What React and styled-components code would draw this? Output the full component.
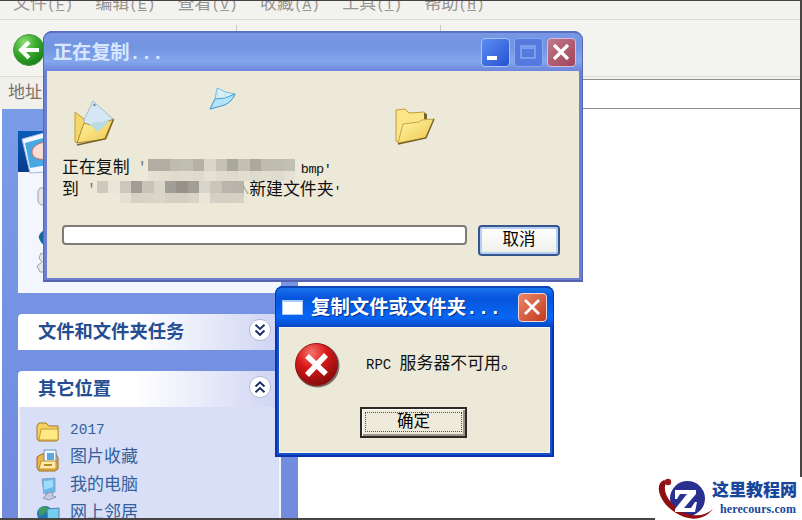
import React from 'react'
import styled, { createGlobalStyle } from 'styled-components'

const GlobalStyle = createGlobalStyle`
    * {
        box-sizing: border-box;
    }
    body {
        margin: 0;
        overflow: hidden;
        font-family: "Liberation Mono", "Noto Sans CJK SC", monospace;
    }
`;

const menus = [['文件', 'F'], ['编辑', 'E'], ['查看', 'V'], ['收藏', 'A'], ['工具', 'T'], ['帮助', 'H']]

// shades of the censored file name and path, one per block
const nameTop = ['#b1ada2', '#b1ada2', '#bebbaf', '#c0bdb1', '#b5b1a7', '#d9d5c7', '#c5c1b5', '#aaa79c', '#c3bfb3', '#aaa79d', '#bfbcaf', '#bfbcb0', '#c2bfb3']
const nameLow = ['#e4e0d2', '#e1ddcf', '#dedace', '#e0dccf', '#dedace', '#e5e1d3', '#e0dccf', '#dedace', '#e1ddcf', '#dedace', '#e1ddcf', '#dfdbcf', '#e4e0d3']
const pathTop = ['#cdc9bd', '#e8e4d8', '#cbc7bc', '#a19d94', '#c6c2b7', '#d9d5c8', '#a19e97', '#969289', '#a19e96', '#d8d4c8', '#c9c5ba', '#b9b5ab', '#b7b3a8']
const pathLow = ['#ece9d8', '#ece9d8', '#e3dfd3', '#d5d1c5', '#d7d3c7', '#d9d5c9', '#d4d0c4', '#d3cfc3', '#d7d3c7', '#e9e5d7', '#d4d0c5', '#d4d0c4', '#d5d1c5']

function Mosaic({ top, low }) {
    return (
        <Blocks>
            {top.concat(low).map((shade, i) => <Block key={i} $shade={shade} />)}
        </Blocks>
    )
}

function BackIcon() {
    return (
        <svg width="34" height="34" viewBox="0 0 34 34">
            <defs>
                <radialGradient id="back" cx="35%" cy="25%" r="80%">
                    <stop offset="0" stopColor="#8bdd72" />
                    <stop offset=".5" stopColor="#38ab2c" />
                    <stop offset="1" stopColor="#167d18" />
                </radialGradient>
            </defs>
            <circle cx="17" cy="17" r="15.5" fill="url(#back)" stroke="#4c9744" />
            <path d="M17 9l-8 8 8 8M10 17h17" fill="none" stroke="#fff" strokeWidth="4" />
        </svg>
    )
}

function FolderOpen({ paper }) {
    return (
        <svg width="44" height="48" viewBox="0 0 44 48">
            <defs>
                <linearGradient id="fold" x1="0" y1="0" x2="1" y2="1">
                    <stop offset="0" stopColor="#fff6a6" />
                    <stop offset="1" stopColor="#efc64e" />
                </linearGradient>
            </defs>
            {paper
                ? <path d="M3 14l9 7 2 12-8 12-3-1z" fill="#f5d968" stroke="#c49c3c" />
                : <path d="M3 13l9-1 4 4 15-1 2 2v17L6 46l-3-2z" fill="#fae588" stroke="#c49c3c" />}
            {paper && <path d="M12 22L21 3l20 18-9 14-16 4z" fill="#d5e6f5" stroke="#a7bdce" />}
            {paper && <circle cx="22.500" cy="7" r="1.300" fill="#7890ad" />}
            {paper
                ? <path d="M5 45l7-20 10 3 20-7-8 20z" fill="url(#fold)" stroke="#ad892e" />
                : <path d="M5 46l5-19 16-2 3-2 12-1-9 19z" fill="url(#fold)" stroke="#c6a344" />}
            {paper && <path d="M17 27c9-6 12-1 20-5-4 8-9 9-13 12-1-4-3-5-7-7z" fill="#b9dce2" />}
            <path d="M5 47l28-6 8-19" fill="none" stroke="#756126" strokeWidth="1.300" />
            {!paper && <path d="M31 16l3 1v5h-3z" fill="#746431" />}
        </svg>
    )
}

function FlyingPage() {
    return (
        <svg width="30" height="26" viewBox="0 0 30 26">
            <path d="M9 1q8 5 18 6-4 10-14 12l-11 3 5-10z" fill="#d9f1fb" stroke="#7ebbdc" />
            <path d="M7 12l10-1 10-4q-4 10-14 12L2 22z" fill="#b5e4f8" stroke="#459dcc" />
            <path d="M9 2l1 9M17 6v5" stroke="#b6ddea" />
        </svg>
    )
}

function PhotoIcon() {
    return (
        <svg width="30" height="44" viewBox="0 0 30 44">
            <path d="M2 8L27 1v40l-17 1z" fill="#f3f7ff" stroke="#9db8df" />
            <path d="M5 12l22-6v28l-17 3z" fill="#48a8e2" />
            <path d="M27 11c-8 0-16 5-15 11s9 7 15 6z" fill="#f7ddd4" stroke="#c56d68" />
        </svg>
    )
}

function Chevrons({ up }) {
    return (
        <svg width="24" height="24" viewBox="0 0 24 24">
            <circle cx="12" cy="12" r="10.6" fill="#fff" stroke="#b2b9d2" />
            <path
                d={up ? 'M7.5 11.5L12 7.3l4.5 4.2M7.5 17.3l4.5-4.2 4.5 4.2' : 'M7.5 6.8L12 11l4.5-4.2M7.5 12.6l4.5 4.2 4.5-4.2'}
                fill="none" stroke="#1d2f68" strokeWidth="2" />
        </svg>
    )
}

function PlaceIcon({ kind }) {
    return (
        <svg width="24" height="24" viewBox="0 0 24 24">
            {kind === 'folder' && <>
                <path d="M1 5l2-3h7l3 3h9v14l-2 1H3l-2-2z" fill="#f4d164" stroke="#a3781f" />
                <path d="M5 8h17v11H3z" fill="#fee983" stroke="#c49a31" />
            </>}
            {kind === 'photos' && <>
                <path d="M1 8l5-3h14l2 4v11l-3 2H3l-2-3z" fill="#edb54b" stroke="#9a6d22" />
                <path d="M8 1h12v13H8z" fill="#f3faff" stroke="#5c92bd" />
                <path d="M11 4h7v7h-7z" fill="#5da8d8" />
                <path d="M5 12h15v8H3z" fill="#ffeaa6" stroke="#bd8d2d" />
                <path d="M8 16h8" stroke="#b58a35" strokeWidth="2" />
            </>}
            {kind === 'computer' && <>
                <path d="M6 2l13-1v14l-11 2z" fill="#65b9ec" stroke="#8aa4c5" />
                <path d="M8 4l9-1v7l-9 3z" fill="#9bdcfb" />
                <path d="M12 16l4-1 1 4 3 1-7 3-6-2z" fill="#c5c8df" stroke="#9094b4" />
            </>}
            {kind === 'network' && <>
                <circle cx="9" cy="9" r="8" fill="#2179b4" />
                <path d="M3 4q6-5 9 0l-4 5-5 2z" fill="#3e9d5a" />
                <path d="M11 4l12-1v13l-11 2z" fill="#74cdee" stroke="#517fae" />
            </>}
        </svg>
    )
}

function ErrorIcon() {
    return (
        <svg width="48" height="48" viewBox="0 0 48 48">
            <defs>
                <radialGradient id="err" cx="38%" cy="22%" r="80%">
                    <stop offset="0" stopColor="#f5746b" />
                    <stop offset=".45" stopColor="#d8191a" />
                    <stop offset="1" stopColor="#840c0c" />
                </radialGradient>
            </defs>
            <circle cx="22.500" cy="22.500" r="22" fill="#77736b" />
            <circle cx="21.500" cy="21.500" r="21" fill="url(#err)" stroke="#9a1717" />
            <path d="M12 13l19 18M31 12L12 32" stroke="#fff" strokeWidth="5.500" />
        </svg>
    )
}

function LogoMark() {
    return (
        <svg width="60" height="43" viewBox="0 0 60 43">
            <circle cx="32.500" cy="21.500" r="17.500" fill="#29308f" />
            <path d="M9 3C-1 7 4 24 18 34s30 11 40-2c-10 9-25 8-36-1S7 11 12 5z" fill="#8f1013" />
            <circle cx="13" cy="5" r="3.200" fill="#98191b" />
            <path d="M20 13h21v4L29 31h7l4-6h2l-2 10H20v-3l12-15h-7l-3 5h-2z" fill="#fff" />
        </svg>
    )
}

function App() {
    return (
        <Screen>
            <GlobalStyle />
            <MenuBar>
                {menus.map(([label, key]) => <MenuItem key={key}>{label}<span>(<u>{key}</u>)</span></MenuItem>)}
            </MenuBar>
            <ToolBar>
                <BackIcon />
                <Separator $gap={190} />
                <Separator $gap={203} />
            </ToolBar>
            <AddressBar>
                <AddressLabel>地址</AddressLabel>
                <AddressField />
            </AddressBar>
            <Main>
                <SideBar>
                    <PictureTasks>
                        <PictureHead><PhotoIcon /></PictureHead>
                        <PictureBody>
                            <svg width="10" height="94" viewBox="0 0 10 94">
                                <path d="M9 5H4L2 8v11l3 3h4M9 72L5 70l-2 5 3 4-5 4 3 6h5" fill="#e6e6e9" stroke="#9da0aa" />
                                <path d="M10 46q-8 4-7 9t7 8z" fill="#176a9f" />
                            </svg>
                        </PictureBody>
                    </PictureTasks>
                    <PanelHead>文件和文件夹任务<Chevrons /></PanelHead>
                    <Panel>
                        <PanelHead>其它位置<Chevrons up /></PanelHead>
                        <Places>
                            <Place><PlaceIcon kind="folder" /><span>2017</span></Place>
                            <Place><PlaceIcon kind="photos" /><span>图片收藏</span></Place>
                            <Place><PlaceIcon kind="computer" /><span>我的电脑</span></Place>
                            <Place><PlaceIcon kind="network" /><span>网上邻居</span></Place>
                        </Places>
                    </Panel>
                </SideBar>
            </Main>
            <TopEdge />
            <BottomEdge />
            <RightEdge />

            <CopyWindow>
                <CopyTitle>
                    <CopyCaption>正在复制...</CopyCaption>
                    <TitleButton $bg="linear-gradient(135deg, #5c8df2, #2452d2)" $edge="#a8c4f6">
                        <svg width="26" height="26"><path d="M5 19h10" stroke="#fff" strokeWidth="4" /></svg>
                    </TitleButton>
                    <TitleButton $bg="#5479df" $edge="#88a6ee">
                        <svg width="26" height="26"><path d="M6 7h14v12H6zM6 9h14" fill="none" stroke="#7c9cec" strokeWidth="2" /></svg>
                    </TitleButton>
                    <TitleButton $bg="linear-gradient(135deg, #c0798b, #a14459)" $edge="#d5bcdf">
                        <svg width="26" height="26"><path d="M6 6l14 14M20 6L6 20" stroke="#fff" strokeWidth="3.200" /></svg>
                    </TitleButton>
                </CopyTitle>
                <CopyBody>
                    <Animation>
                        <FolderOpen paper />
                        <FlyingPage />
                        <FolderOpen />
                    </Animation>
                    <CopyLine>正在复制<Quote> '</Quote><Mosaic top={nameTop} low={nameLow} /><small>bmp'</small></CopyLine>
                    <CopyLine>到<Quote> '</Quote><Mosaic top={pathTop} low={pathLow} /><i>\</i>新建文件夹<small>'</small></CopyLine>
                    <Controls>
                        <Progress />
                        <CancelButton>取消</CancelButton>
                    </Controls>
                </CopyBody>
            </CopyWindow>

            <ErrorWindow>
                <ErrorTitle>
                    <WindowGlyph />
                    <ErrorCaption>复制文件或文件夹...</ErrorCaption>
                    <TitleButton $bg="linear-gradient(135deg, #e98766, #c43a20)" $edge="#f3d4cf">
                        <svg width="27" height="27"><path d="M6 6l14 14M20 6L6 20" stroke="#fff" strokeWidth="2.800" /></svg>
                    </TitleButton>
                </ErrorTitle>
                <ErrorBody>
                    <Message><ErrorIcon /><MessageText><small>RPC </small>服务器不可用。</MessageText></Message>
                    <OkButton><span>确定</span></OkButton>
                </ErrorBody>
            </ErrorWindow>

            <Watermark>
                <LogoMark />
                <SiteName>
                    <b>这里教程网</b>
                    <span>herecours.com</span>
                </SiteName>
            </Watermark>
        </Screen>
    )
}

const Screen = styled.div`
    position: relative;
    display: flex;
    flex-direction: column;
    width: 802px;
    height: 520px;
    overflow: hidden;
    background: #fff;
`;
const MenuBar = styled.div`
    display: flex;
    height: 20px;
    flex: none;
    padding-left: 13px;
    overflow: hidden;
    background: #f2f2ef;
    border-bottom: 1px solid #dcdad2;
`;
const MenuItem = styled.div`
    width: 82.300px;
    height: 20px;
    margin-top: -5px;
    font-size: 17px;
    line-height: 20px;
    white-space: nowrap;
    color: #96948f;
    span {
        font-size: 14.500px;
    }
`;
const ToolBar = styled.div`
    display: flex;
    height: 57px;
    flex: none;
    padding: 13px 0 0 12px;
    background: #f3f3f0;
    border-bottom: 1px solid #dddbd3;
`;
const Separator = styled.div`
    width: 1px;
    height: 32px;
    margin: -8px 0 0 ${props => props.$gap}px;
    background: #c9c7c0;
`;
const AddressBar = styled.div`
    display: flex;
    height: 32px;
    flex: none;
    padding-top: 2px;
    background: #f1f0eb;
`;
const AddressLabel = styled.div`
    width: 60px;
    padding-left: 8px;
    font-size: 17px;
    line-height: 29px;
    color: #77736b;
`;
const AddressField = styled.div`
    flex: 1;
    border: 1px solid #8e8e95;
    background: #fff;
`;
const Main = styled.div`
    display: flex;
    flex: 1;
    min-height: 0;
    padding-left: 2px;
`;
const SideBar = styled.div`
    display: flex;
    flex-direction: column;
    gap: 21px;
    width: 296px;
    padding: 22px 17px 0 16px;
    overflow: hidden;
    background: linear-gradient(#7a9ce7, #708ade);
`;
const PictureTasks = styled.div`
    flex: none;
    height: 162px;
    background: #f4f6ff;
`;
const PictureHead = styled.div`
    height: 41px;
    background: linear-gradient(#0a5bb8, #063a8d);
    svg {
        display: block;
        margin-left: 2px;
    }
`;
const PictureBody = styled.div`
    padding: 11px 0 0 18px;
`;
const PanelHead = styled.div`
    display: flex;
    align-items: center;
    justify-content: space-between;
    flex: none;
    height: 36px;
    padding: 1px 9px 0 20px;
    border-radius: 4px 4px 0 0;
    background: linear-gradient(90deg, #fff 45%, #ced4f3);
    font-size: 18.300px;
    font-weight: 700;
    line-height: 36px;
    color: #254d92;
    svg {
        margin-bottom: 5px;
    }
`;
const Panel = styled.div`
    flex: none;
`;
const Places = styled.div`
    height: 140px;
    padding: 9px 0 0 18px;
    background: #d8dff7;
    border: solid #f2f5ff;
    border-width: 0 2px;
`;
const Place = styled.div`
    display: flex;
    align-items: center;
    gap: 10px;
    height: 28px;
    font-size: 17px;
    line-height: 28px;
    color: #34619d;
    svg {
        margin: 6px 0 0 -2px;
    }
    &:first-child span {
        font-size: 14.500px;
    }
`;
const TopEdge = styled.div`
    position: absolute;
    top: 0;
    left: 0;
    right: 0;
    height: 1px;
    background: #494444;
`;
const BottomEdge = styled(TopEdge)`
    top: 518px;
    height: 2px;
`;
const RightEdge = styled(TopEdge)`
    left: 800px;
    height: 477px;
`;

const CopyWindow = styled.div`
    position: absolute;
    left: 43px;
    top: 31px;
    display: flex;
    flex-direction: column;
    width: 540px;
    height: 251px;
    padding: 0 4px 4px;
    border-radius: 9px 9px 0 0;
    background: #6d7fd0;
    box-shadow: inset 0 0 0 1px #5966b3, inset 0 -2px 0 #5260ae;
    overflow: hidden;
`;
const CopyTitle = styled.div`
    display: flex;
    align-items: center;
    gap: 4px;
    flex: none;
    height: 40px;
    margin: 0 -3px;
    padding: 1px 6px 0 9px;
    border-top: 2px solid #596fc4;
    border-radius: 8px 8px 0 0;
    background: linear-gradient(#7897e4, #7294e1 35%, #83a6ec 75%, #6d85da);
`;
const CopyCaption = styled.div`
    flex: 1;
    padding-top: 2px;
    font-size: 19.300px;
    font-weight: 700;
    line-height: 30px;
    letter-spacing: -.2px;
    color: #d8e7ff;
`;
const TitleButton = styled.div`
    width: 29px;
    height: 29px;
    border: 1px solid ${props => props.$edge};
    border-radius: 4px;
    background: ${props => props.$bg};
    svg {
        display: block;
    }
`;
const CopyBody = styled.div`
    flex: 1;
    padding: 15px 15px 0;
    background: #ece9d8;
`;
const Animation = styled.div`
    display: flex;
    height: 72px;
    padding-left: 10px;
    svg:nth-child(1) {
        margin-top: 12px;
    }
    svg:nth-child(2) {
        margin: 1px 156px 0 92px;
    }
    svg:nth-child(3) {
        margin: 11px 0 0 -1px;
    }
`;
const CopyLine = styled.div`
    display: flex;
    height: 22px;
    font-size: 16.900px;
    line-height: 22px;
    white-space: pre;
    color: #111;
    small {
        font-family: "Liberation Mono", monospace;
        font-size: 13.500px;
        letter-spacing: -.5px;
        line-height: 23px;
    }
    div + small {
        margin-left: 6px;
    }
    i {
        width: 7px;
        margin-left: -2px;
        font-size: 11.500px;
        font-style: normal;
        color: #99968c;
    }
`;
const Quote = styled.span`
    width: 18px;
    font-size: 14px;
    line-height: 20px;
    color: #6f6d66;
`;
const Blocks = styled.div`
    display: grid;
    grid-template-columns: repeat(13, 11.330px);
    grid-template-rows: 12px 10px;
    margin-top: 1px;
`;
const Block = styled.div`
    background: ${props => props.$shade};
`;
const Controls = styled.div`
    display: flex;
    gap: 11px;
    padding-top: 23px;
`;
const Progress = styled.div`
    width: 405px;
    height: 20px;
    border: 2px solid #7e7b78;
    border-radius: 4px;
    background: #fff;
`;
const CancelButton = styled.div`
    width: 82px;
    height: 31px;
    border: 2px solid #36558d;
    border-radius: 4px;
    background: linear-gradient(#fff, #eeeee9);
    box-shadow: inset 0 0 0 2px #b4cff2;
    font-size: 16.500px;
    line-height: 27px;
    text-align: center;
    color: #000;
`;

const ErrorWindow = styled.div`
    position: absolute;
    left: 275px;
    top: 286px;
    display: flex;
    flex-direction: column;
    width: 279px;
    height: 171px;
    padding: 0 4px 4px;
    border-radius: 8px 8px 0 0;
    background: #1650cc;
    box-shadow: inset 0 0 0 2px #0835ac;
    overflow: hidden;
`;
const ErrorTitle = styled.div`
    display: flex;
    align-items: center;
    flex: none;
    height: 41px;
    margin: 0 -3px;
    padding: 0 6px;
    border-top: 2px solid #0b46b5;
    border-radius: 7px 7px 0 0;
    background: linear-gradient(#1973ed, #0755dc 25%, #0866f4 75%, #0647c5);
`;
const WindowGlyph = styled.div`
    width: 21px;
    height: 15px;
    border: 1px solid #a9cafa;
    border-top-width: 2px;
    background: #fff;
`;
const ErrorCaption = styled.div`
    flex: 1;
    padding: 2px 0 0 8px;
    font-size: 19.400px;
    font-weight: 700;
    line-height: 30px;
    white-space: nowrap;
    color: #fff;
    text-shadow: 1px 1px 1px #08328a;
`;
const ErrorBody = styled.div`
    flex: 1;
    padding: 14px 15px 0;
    background: #ece9d8;
    border: 1px solid #f7f4e8;
`;
const Message = styled.div`
    display: flex;
    align-items: center;
    height: 50px;
`;
const MessageText = styled.div`
    margin: -12px 0 0 23px;
    font-size: 16.900px;
    white-space: pre;
    color: #111;
    small {
        font-size: 14px;
    }
`;
const OkButton = styled.div`
    width: 107px;
    height: 31px;
    margin: 15px 0 0 65px;
    padding: 3px;
    border: 2px solid #2d2927;
    background: #eeebdc;
    box-shadow: inset 1px 1px 0 #fff, inset -2px -2px 0 #99958b;
    text-align: center;
    span {
        display: block;
        height: 20px;
        border: 1px dotted #55504a;
        font-size: 16.500px;
        line-height: 19px;
    }
`;
const Watermark = styled.div`
    position: absolute;
    left: 655px;
    top: 477px;
    display: flex;
    width: 147px;
    height: 43px;
    background: #fff;
`;
const SiteName = styled.div`
    display: flex;
    flex-direction: column;
    margin-left: -3px;
    white-space: nowrap;
    color: #18469c;
    b {
        font-family: "Liberation Serif", "Noto Sans CJK SC", serif;
        font-size: 17px;
        font-weight: 900;
        line-height: 27px;
    }
    span {
        padding-left: 8px;
        font-family: "Liberation Serif", serif;
        font-size: 12px;
        font-weight: 700;
        line-height: 10px;
        letter-spacing: .1px;
    }
`;

export default App
